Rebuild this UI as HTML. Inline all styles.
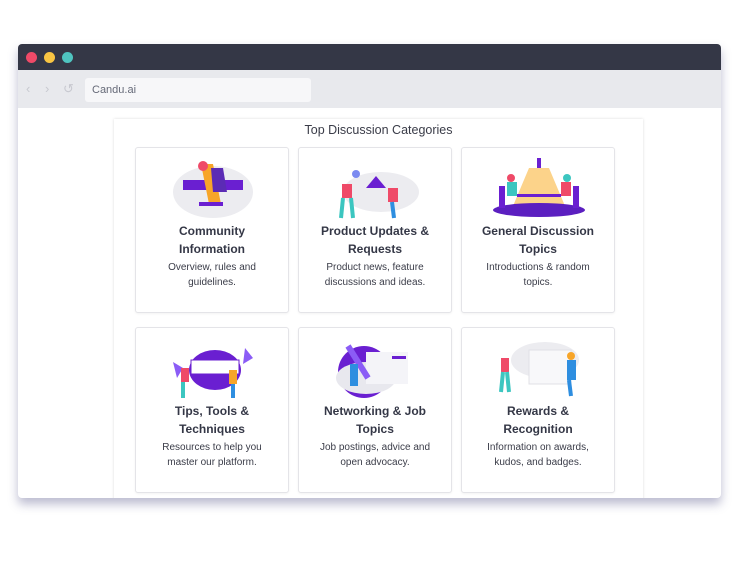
<!DOCTYPE html>
<html><head><meta charset="utf-8"><style>
*{margin:0;padding:0;box-sizing:border-box}
body{width:740px;height:578px;background:#fff;font-family:"Liberation Sans",sans-serif;position:relative;overflow:hidden}
.win{position:absolute;left:18px;top:44px;width:703px;height:454px;background:#fff;border-radius:4px;box-shadow:0 6px 10px rgba(60,60,120,.35);overflow:hidden}
.tb{height:26px;background:#343746;position:relative}
.dot{position:absolute;top:8px;width:11px;height:11px;border-radius:50%}
.bar{height:38px;background:#e8e9ed;position:relative}
.url{position:absolute;left:67px;top:8px;width:226px;height:24px;background:#f7f7f9;border-radius:3px;font-size:11px;color:#666a78;padding:6px 7px}
.nav{position:absolute;top:11px;color:#c8c9d0;font-size:13px}
.panel{position:absolute;left:96px;top:75px;width:529px;height:400px;background:#fff;box-shadow:0 0 3px rgba(0,0,0,.14)}
h1{position:absolute;left:114px;top:123px;width:529px;text-align:center;font-size:12.5px;font-weight:normal;color:#3a3c48}
.card{position:absolute;width:154px;height:166px;border:1px solid #e4e4e8;border-radius:3px;background:#fff;text-align:center;box-shadow:0 1px 2px rgba(0,0,0,.05)}
.card svg{position:absolute;left:27px;top:6px}
.t{position:absolute;top:74px;left:0;width:100%;font-weight:bold;font-size:12px;line-height:18px;color:#343746}
.d{position:absolute;top:112px;left:14px;right:14px;font-size:10px;line-height:15px;color:#3a3c48}
</style></head><body>
<div class="win">
 <div class="tb"><div class="dot" style="left:8px;background:#ef4a68"></div><div class="dot" style="left:26px;background:#f9c543"></div><div class="dot" style="left:44px;background:#4fc4c0"></div></div>
 <div class="bar"><span class="nav" style="left:8px">‹</span><span class="nav" style="left:27px">›</span><span class="nav" style="left:45px">↺</span><div class="url">Candu.ai</div></div>
 <div class="panel"></div>
</div>
<h1>Top Discussion Categories</h1>

<div class="card" style="left:135px;top:147px">
<svg width="100" height="66"><ellipse cx="50" cy="38" rx="40" ry="26" fill="#ececf0"/><rect x="20" y="26" width="60" height="10" fill="#6a1fd1"/><path d="M38 10l12 0 8 40h-12z" fill="#f7a529"/><circle cx="40" cy="12" r="5" fill="#ef4a68"/><path d="M48 14l12 0 4 24h-14z" fill="#5b2bb5"/><rect x="36" y="48" width="24" height="4" fill="#6a1fd1"/></svg>
<div class="t">Community<br>Information</div><div class="d">Overview, rules and guidelines.</div></div>

<div class="card" style="left:298px;top:147px">
<svg width="100" height="66"><ellipse cx="55" cy="38" rx="38" ry="20" fill="#ececf0"/><path d="M40 34l10-12 10 12z" fill="#6a1fd1"/><rect x="16" y="30" width="10" height="14" fill="#ef4a68"/><path d="M17 44l-2 20M25 44l2 20" stroke="#3cc6c0" stroke-width="4"/><rect x="62" y="34" width="10" height="14" fill="#ef4a68"/><path d="M66 48l2 16" stroke="#2e8ee0" stroke-width="4"/><circle cx="30" cy="20" r="4" fill="#7b8af0"/></svg>
<div class="t">Product Updates &amp;<br>Requests</div><div class="d">Product news, feature discussions and ideas.</div></div>

<div class="card" style="left:461px;top:147px">
<svg width="100" height="66"><path d="M40 14h20l16 38h-52z" fill="#fcd38a"/><rect x="48" y="4" width="4" height="10" fill="#6a1fd1"/><ellipse cx="50" cy="56" rx="46" ry="7" fill="#5b1fc0"/><rect x="10" y="32" width="6" height="22" fill="#6a1fd1"/><rect x="84" y="32" width="6" height="22" fill="#6a1fd1"/><rect x="18" y="28" width="10" height="14" fill="#3cc6c0"/><rect x="72" y="28" width="10" height="14" fill="#ef4a68"/><rect x="28" y="40" width="44" height="3" fill="#6a1fd1"/><circle cx="22" cy="24" r="4" fill="#ef4a68"/><circle cx="78" cy="24" r="4" fill="#3cc6c0"/></svg>
<div class="t">General Discussion<br>Topics</div><div class="d" style="left:20px;right:20px">Introductions &amp; random topics.</div></div>

<div class="card" style="left:135px;top:327px">
<svg width="100" height="66"><ellipse cx="52" cy="36" rx="26" ry="20" fill="#6a1fd1"/><rect x="28" y="26" width="48" height="14" fill="#fff" stroke="#6a1fd1"/><path d="M10 28l10 6-6 10z" fill="#8b5cf6"/><path d="M82 14l8 10-10 6z" fill="#8b5cf6"/><rect x="18" y="34" width="8" height="14" fill="#ef4a68"/><path d="M20 48l0 16" stroke="#3cc6c0" stroke-width="4"/><rect x="66" y="36" width="8" height="14" fill="#f7a529"/><path d="M70 50l0 14" stroke="#2e8ee0" stroke-width="4"/></svg>
<div class="t">Tips, Tools &amp;<br>Techniques</div><div class="d" style="left:20px;right:20px">Resources to help you master our platform.</div></div>

<div class="card" style="left:298px;top:327px">
<svg width="100" height="66"><circle cx="38" cy="38" r="26" fill="#6a1fd1"/><ellipse cx="40" cy="44" rx="30" ry="16" fill="#e8e8ee"/><rect x="40" y="18" width="42" height="32" fill="#f4f4f8"/><rect x="66" y="22" width="14" height="3" fill="#6a1fd1"/><path d="M22 12l20 32" stroke="#8b5cf6" stroke-width="6"/><rect x="24" y="30" width="8" height="22" fill="#2e8ee0"/></svg>
<div class="t">Networking &amp; Job<br>Topics</div><div class="d" style="left:16px;right:16px">Job postings, advice and open advocacy.</div></div>

<div class="card" style="left:461px;top:327px">
<svg width="100" height="66"><ellipse cx="56" cy="26" rx="34" ry="18" fill="#ececf0"/><rect x="40" y="16" width="42" height="34" fill="#f8f8fa" stroke="#e0e0e6"/><rect x="12" y="24" width="8" height="14" fill="#ef4a68"/><path d="M14 38l-2 20M18 38l2 20" stroke="#3cc6c0" stroke-width="4"/><circle cx="82" cy="22" r="4" fill="#f7a529"/><rect x="78" y="26" width="9" height="20" fill="#2e8ee0"/><path d="M80 46l2 16" stroke="#2e8ee0" stroke-width="4"/></svg>
<div class="t">Rewards &amp;<br>Recognition</div><div class="d" style="left:18px;right:18px">Information on awards, kudos, and badges.</div></div>
</body></html>
